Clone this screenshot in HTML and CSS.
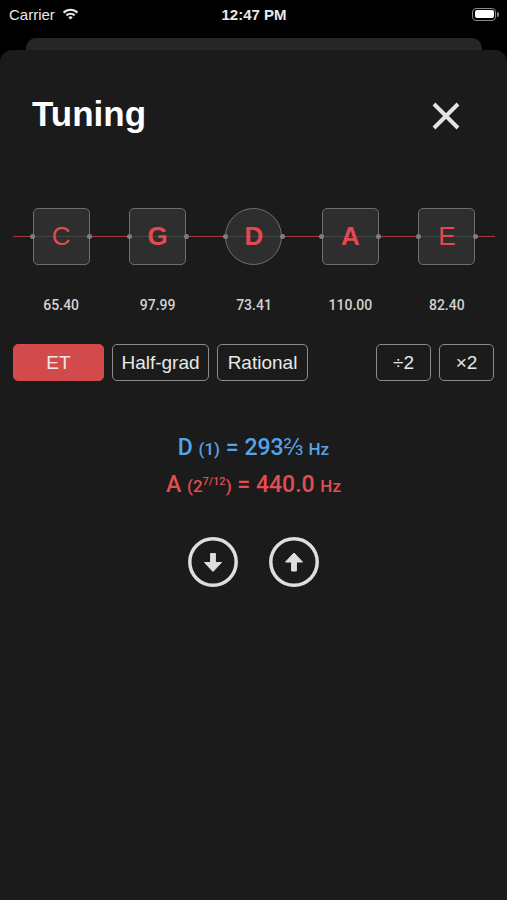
FILE: index.html
```html
<!DOCTYPE html>
<html>

<head>
    <title>Tuning</title>
    <link rel="stylesheet" href="styles.css">
</head>

<body>
    <div class="status-bar">
        <div class="status-left">
            <span>Carrier</span>
            <svg class="wifi" width="17" height="12" viewBox="0 0 17 12">
                <path d="M1.6 4.6 A9.8 9.8 0 0 1 15.4 4.6" fill="none" stroke="#e8e8e8" stroke-width="2.2"/>
                <path d="M4.4 7.4 A5.9 5.9 0 0 1 12.6 7.4" fill="none" stroke="#e8e8e8" stroke-width="2.2"/>
                <path d="M8.5 11.6 L6.3 9.4 A3.1 3.1 0 0 1 10.7 9.4 Z" fill="#e8e8e8"/>
            </svg>
        </div>
        <div class="status-time">12:47 PM</div>
        <div class="status-right">
            <div class="battery"><div class="battery-level"></div></div>
            <div class="battery-cap"></div>
        </div>
    </div>

    <div class="sheet-behind"></div>

    <div class="sheet">
        <div class="header">
            <h1>Tuning</h1>
            <button class="close">
                <svg width="28" height="28" viewBox="0 0 28 28">
                    <path d="M2 2 L26 26 M26 2 L2 26" stroke="#e4e4e4" stroke-width="4"/>
                </svg>
            </button>
        </div>

        <div class="strings">
            <div class="string"><div class="note">C</div></div>
            <div class="string"><div class="note bold">G</div></div>
            <div class="string"><div class="note bold round">D</div></div>
            <div class="string"><div class="note bold">A</div></div>
            <div class="string"><div class="note">E</div></div>
        </div>

        <div class="freqs">
            <span>65.40</span>
            <span>97.99</span>
            <span>73.41</span>
            <span>110.00</span>
            <span>82.40</span>
        </div>

        <div class="controls">
            <button class="btn active w-91">ET</button>
            <button class="btn w-97">Half-grad</button>
            <button class="btn w-91">Rational</button>
            <button class="btn w-55 push">÷2</button>
            <button class="btn w-55">×2</button>
        </div>

        <div class="readout">
            <div class="ref">D <small>(1)</small> = 293⅔ <small>Hz</small></div>
            <div class="target">A <small>(2<sup>7/12</sup>)</small> = 440.0 <small>Hz</small></div>
        </div>

        <div class="shift">
            <button class="round-btn">
                <svg width="50" height="50" viewBox="0 0 50 50">
                    <circle cx="25" cy="25" r="23.2" fill="none" stroke="#dedede" stroke-width="3.5"/>
                    <path d="M22.6 16.5 H27.4 V25.5 H33.5 L25 34.5 L16.5 25.5 H22.6 Z" fill="#dedede" stroke="#dedede" stroke-width="1" stroke-linejoin="round"/>
                </svg>
            </button>
            <button class="round-btn">
                <svg width="50" height="50" viewBox="0 0 50 50">
                    <circle cx="25" cy="25" r="23.2" fill="none" stroke="#dedede" stroke-width="3.5"/>
                    <path d="M22.6 34 H27.4 V25 H33.5 L25 16 L16.5 25 H22.6 Z" fill="#dedede" stroke="#dedede" stroke-width="1" stroke-linejoin="round"/>
                </svg>
            </button>
        </div>
    </div>
</body>

</html>
```

FILE: styles.css
```css
body {
    margin: 0;
    background-color: #000;
    font-family: "Liberation Sans", Arial, sans-serif;
    color: #e8e8e8;
}

button {
    font-family: inherit;
    cursor: pointer;
}

/* status bar */

.status-bar {
    display: grid;
    grid-template-columns: 1fr auto 1fr;
    align-items: center;
    height: 28px;
    padding: 0 8px 0 9px;
    font-size: 15px;
    color: #e8e8e8;
}

.status-left {
    display: flex;
    align-items: center;
    gap: 7px;
}

.status-time {
    font-weight: bold;
}

.status-right {
    display: flex;
    align-items: center;
    justify-content: flex-end;
}

.battery {
    width: 24px;
    height: 13px;
    box-sizing: border-box;
    border: 1px solid #8a8a8a;
    border-radius: 4px;
    padding: 1.5px;
}

.battery-level {
    height: 100%;
    background-color: #fff;
    border-radius: 2px;
}

.battery-cap {
    width: 2px;
    height: 5px;
    margin-left: 1px;
    background-color: #8a8a8a;
    border-radius: 0 2px 2px 0;
}

/* sheets */

.sheet-behind {
    height: 12px;
    margin: 10px 25px 0 26px;
    background-color: #262626;
    border-radius: 10px 10px 0 0;
}

.sheet {
    min-height: 850px;
    background-color: #1b1b1b;
    border-radius: 12px 12px 0 0;
}

.header {
    display: flex;
    justify-content: space-between;
    align-items: flex-start;
    padding: 43px 47px 0 32px;
}

h1 {
    margin: 0;
    font-size: 35px;
    line-height: 41px;
    font-weight: bold;
    color: #fff;
}

.close {
    margin-top: 9px;
    padding: 0;
    border: none;
    background: none;
    line-height: 0;
}

/* strings */

.strings,
.freqs {
    display: grid;
    grid-template-columns: repeat(5, 1fr);
    margin: 0 12px 0 13px;
}

.strings {
    margin-top: 74px;
    background: linear-gradient(#a63a3a, #a63a3a) center / 100% 1px no-repeat;
}

.string {
    display: flex;
    justify-content: center;
}

.note {
    position: relative;
    width: 57px;
    height: 57px;
    box-sizing: border-box;
    display: flex;
    align-items: center;
    justify-content: center;
    border: 1.5px solid #6e6e6e;
    border-radius: 5px;
    background: linear-gradient(#454545, #454545) center / 100% 1px no-repeat, #2e2e2e;
    font-size: 26px;
    color: #e24a4e;
}

.note.bold {
    font-weight: bold;
}

.note.round {
    border-radius: 50%;
}

.note::before,
.note::after {
    content: "";
    position: absolute;
    top: 50%;
    width: 5px;
    height: 5px;
    margin-top: -2.5px;
    border-radius: 50%;
    background-color: #7e7e7e;
}

.note::before {
    left: -3.5px;
}

.note::after {
    right: -3.5px;
}

.freqs {
    margin-top: 30px;
    font-family: Roboto, sans-serif;
    font-weight: 500;
    font-size: 14px;
    line-height: 20px;
    text-align: center;
    color: #d2d2d2;
}

/* mode buttons */

.controls {
    display: flex;
    gap: 8px;
    margin: 29px 13px 0;
}

.btn {
    height: 37px;
    box-sizing: border-box;
    padding: 0;
    border: 1.5px solid #8c8c8c;
    border-radius: 5px;
    background: transparent;
    color: #e8e8e8;
    font-size: 19px;
}

.btn.active {
    background-color: #d24a4c;
    border-color: #d24a4c;
    color: #f6e4e4;
}

.w-91 { width: 91px; }
.w-97 { width: 97px; }
.w-55 { width: 55px; }

.push {
    margin-left: auto;
}

/* readout */

.readout {
    margin-top: 49px;
    text-align: center;
    font-family: Roboto, sans-serif;
    font-weight: 500;
    font-size: 23px;
    line-height: 36px;
}

.readout small {
    font-size: 17px;
}

.readout sup {
    font-size: 11px;
    vertical-align: 7px;
    line-height: 0;
}

.ref {
    color: #55a4ea;
}

.target {
    color: #e24e50;
}

.shift {
    display: flex;
    justify-content: center;
    gap: 31px;
    margin-top: 33px;
}

.round-btn {
    padding: 0;
    border: none;
    background: none;
    line-height: 0;
}
```
